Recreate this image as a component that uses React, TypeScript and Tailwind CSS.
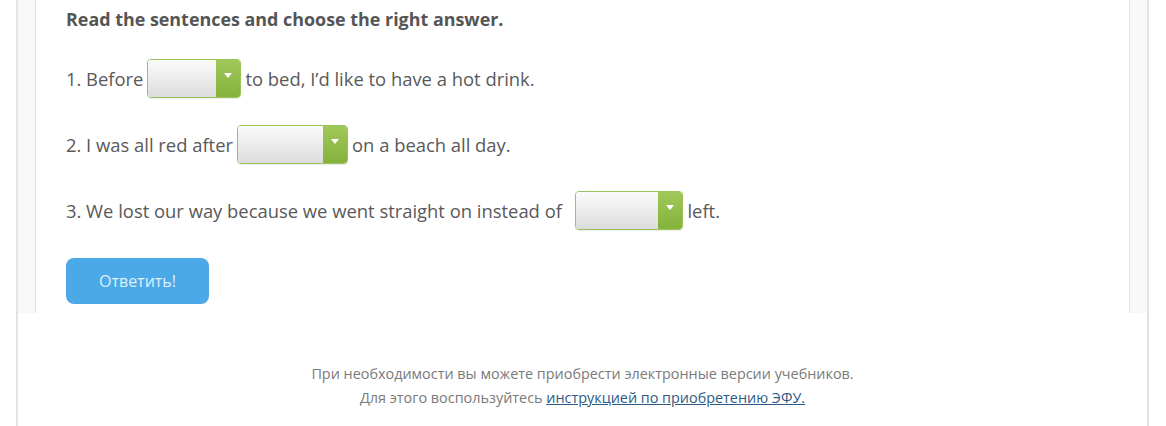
const font = { fontFamily: '"Open Sans", "Noto Sans", sans-serif' };

function Pick({ w }: { w: string }) {
  return (
    <span
      className={`mx-1 inline-flex h-[39px] ${w} items-stretch overflow-hidden rounded-[4px] border border-[#9cc35a] align-middle shadow-[0_1px_1px_rgba(0,0,0,0.08)]`}
    >
      <span className="flex-1 bg-gradient-to-b from-[#fbfbfb] to-[#dcdcdc]" />
      <span className="flex w-[24px] items-center justify-center bg-gradient-to-b from-[#a0c85a] to-[#84b23a]">
        <span className="mb-[6px] h-0 w-0 border-x-[4px] border-t-[5px] border-x-transparent border-t-white" />
      </span>
    </span>
  );
}

export default function App() {
  return (
    <div className="h-[426px] overflow-hidden bg-white" style={font}>
      <div className="mx-[16px] flex h-full w-[1133px] flex-col border-x-2 border-[#e3e3e3]">
        <div className="h-[313px] shrink-0 bg-[#f8f8f8] px-[17px]">
          <div className="h-full border-x border-[#e2e2e2] bg-white pl-[30px] text-[18.4px] text-[#595959]">
            <h2 className="pt-[6px] text-[17.9px] leading-[26px] font-bold text-[#555]">
              Read the sentences and choose the right answer.
            </h2>
            <p className="mt-[27px] flex items-center leading-[39px]">
              1. Before <Pick w="w-[94px]" /> to bed, I’d like to have a hot drink.
            </p>
            <p className="mt-[27px] flex items-center leading-[39px]">
              2. I was all red after <Pick w="w-[111px]" /> on a beach all day.
            </p>
            <p className="mt-[27px] flex items-center leading-[39px]">
              3. We lost our way because we went straight on instead of&nbsp;&nbsp;
              <Pick w="w-[108px]" /> left.
            </p>
            <button className="mt-[28px] h-[46px] w-[143px] rounded-[8px] bg-[#4aa9e6] text-[16px] text-[#dff0fb]">
              Ответить!
            </button>
          </div>
        </div>
        <div className="pt-[49px] text-center text-[14.4px] leading-[24px] text-[#7a7a7a]">
          <p>При необходимости вы можете приобрести электронные версии учебников.</p>
          <p>
            Для этого воспользуйтесь{" "}
            <a href="#" className="text-[#2c5a85] underline">
              инструкцией по приобретению ЭФУ.
            </a>
          </p>
        </div>
      </div>
    </div>
  );
}
